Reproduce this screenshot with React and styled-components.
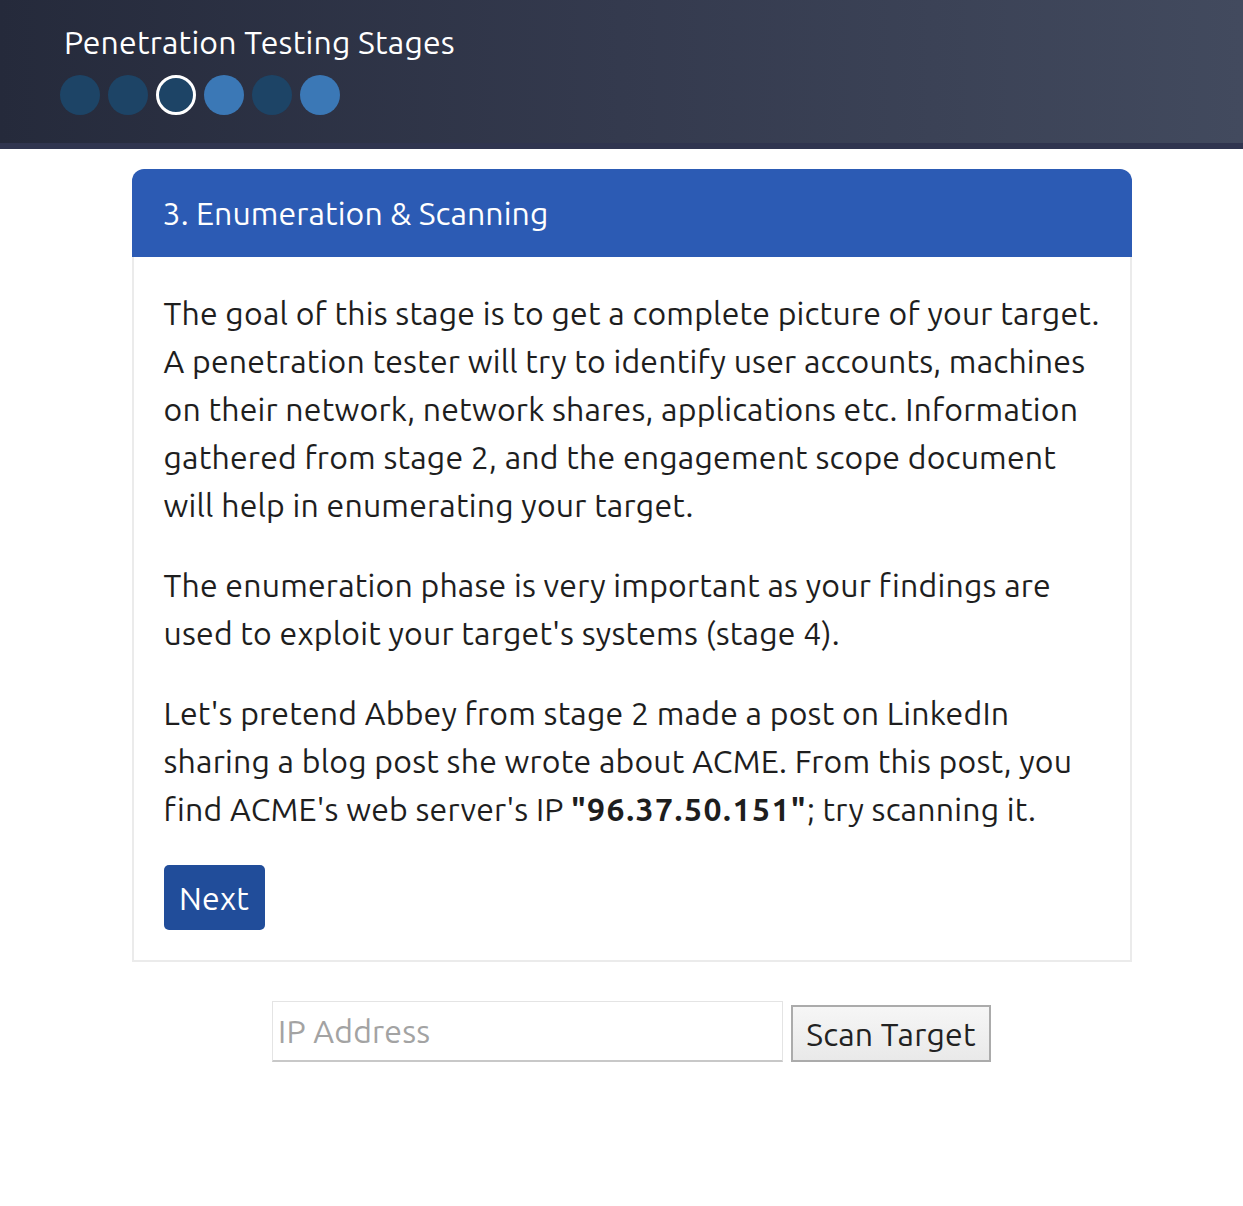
import React from 'react';
import styled, { createGlobalStyle } from 'styled-components';

const GlobalStyle = createGlobalStyle`
	body {
		margin: 0;
		background: #ffffff;
		font-family: 'Ubuntu', 'Noto Sans', sans-serif;
		color: #222222;
		letter-spacing: 0.2px;
	}
`;

const Header = styled.header`
	height: 122px;
	padding: 21px 0 0 60px;
	background: linear-gradient(90deg, #252a3b 0%, #343a4e 50%, #424a5e 100%);
	border-bottom: 6px solid #30354f;
`;

const HeaderTitle = styled.h1`
	margin: 0 0 0 4px;
	font-size: 32px;
	font-weight: 400;
	line-height: 42px;
	color: #ffffff;
`;

const StageDots = styled.div`
	display: flex;
	gap: 8px;
	margin-top: 12px;
`;

const Dot = styled.span`
	width: 40px;
	height: 40px;
	border-radius: 50%;
	box-sizing: border-box;
	background: ${(p) => (p.done ? '#1d4466' : '#3b78b6')};
	border: ${(p) => (p.active ? '3px solid #ffffff' : 'none')};
`;

const Main = styled.main`
	padding: 20px 0 0 20px;
	display: flex;
	flex-direction: column;
	align-items: center;
`;

const Card = styled.section`
	width: 1000px;
`;

const CardHeader = styled.div`
	height: 88px;
	background: #2c5bb4;
	border-radius: 12px 12px 0 0;
	display: flex;
	align-items: center;
	padding-left: 31px;
`;

const CardTitle = styled.h2`
	margin: 0;
	font-size: 32px;
	font-weight: 400;
	letter-spacing: 0.1px;
	color: #ffffff;
`;

const CardBody = styled.div`
	border: 2px solid #ebebeb;
	border-top: none;
	padding: 32px 30px 30px 30px;
`;

const Paragraph = styled.p`
	margin: 0 0 32px 0;
	font-size: 32px;
	font-weight: 400;
	line-height: 48px;
	white-space: nowrap;
	color: #1e1e1e;
`;

const Strong = styled.b`
	font-weight: 700;
	letter-spacing: 1.5px;
`;

const NextButton = styled.button`
	height: 65px;
	width: 101px;
	border: none;
	border-radius: 5px;
	background: #214d9a;
	color: #ffffff;
	font-family: inherit;
	font-size: 32px;
	letter-spacing: 0.2px;
	cursor: pointer;
`;

const ScanForm = styled.form`
	display: flex;
	align-items: flex-end;
	gap: 8px;
	margin-top: 39px;
`;

const IpInput = styled.input`
	width: 511px;
	height: 61px;
	box-sizing: border-box;
	border: 1px solid #e4e4e4;
	border-bottom: 2px solid #c8c8c8;
	padding: 0 5px;
	font-family: inherit;
	font-size: 32px;
	letter-spacing: 0.2px;
	color: #222;
	&::placeholder {
		color: #a3a3a3;
	}
`;

const ScanButton = styled.button`
	width: 200px;
	height: 57px;
	box-sizing: border-box;
	border: 2px solid #ababab;
	background: linear-gradient(#f6f6f6, #e9e9e9);
	font-family: inherit;
	font-size: 32px;
	letter-spacing: 0.2px;
	color: #222;
	padding: 0;
`;

const stages = [
	{ done: true },
	{ done: true },
	{ done: true, active: true },
	{ done: false },
	{ done: true },
	{ done: false },
];

function App() {
	return (
		<>
			<GlobalStyle />
			<Header>
				<HeaderTitle>Penetration Testing Stages</HeaderTitle>
				<StageDots>
					{stages.map((s, i) => (
						<Dot key={i} done={s.done} active={s.active} />
					))}
				</StageDots>
			</Header>
			<Main>
				<Card>
					<CardHeader>
						<CardTitle>3. Enumeration &amp; Scanning</CardTitle>
					</CardHeader>
					<CardBody>
						<Paragraph>
							The goal of this stage is to get a complete picture of your target.
							<br />
							A penetration tester will try to identify user accounts, machines
							<br />
							on their network, network shares, applications etc. Information
							<br />
							gathered from stage 2, and the engagement scope document
							<br />
							will help in enumerating your target.
						</Paragraph>
						<Paragraph>
							The enumeration phase is very important as your findings are
							<br />
							used to exploit your target's systems (stage 4).
						</Paragraph>
						<Paragraph>
							Let's pretend Abbey from stage 2 made a post on LinkedIn
							<br />
							sharing a blog post she wrote about ACME. From this post, you
							<br />
							find ACME's web server's IP <Strong>"96.37.50.151"</Strong>; try scanning it.
						</Paragraph>
						<NextButton type="button">Next</NextButton>
					</CardBody>
				</Card>
				<ScanForm onSubmit={(e) => e.preventDefault()}>
					<IpInput placeholder="IP Address" />
					<ScanButton type="submit">Scan Target</ScanButton>
				</ScanForm>
			</Main>
		</>
	);
}

export default App;
